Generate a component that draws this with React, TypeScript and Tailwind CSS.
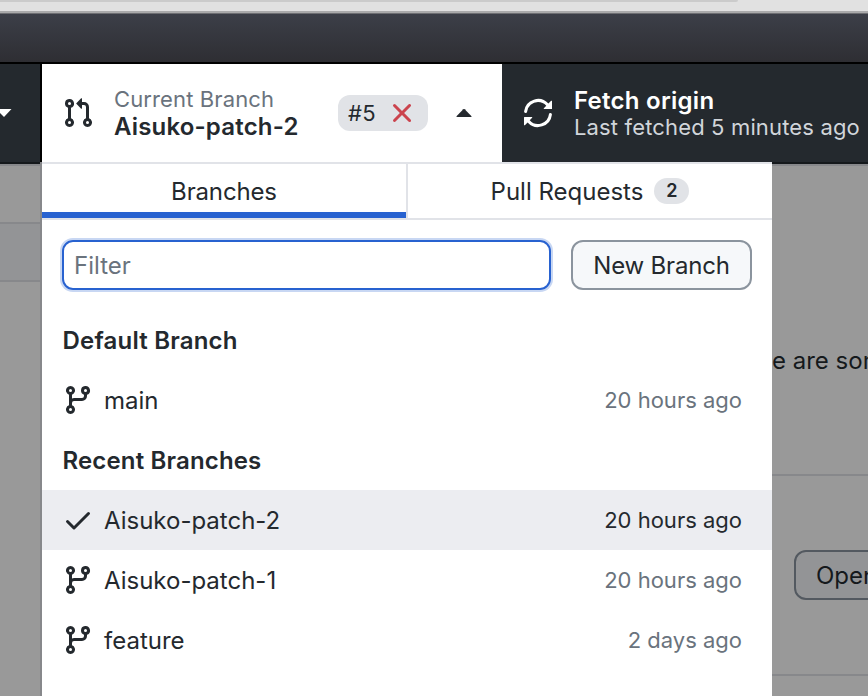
import React from "react";

const PULL =
  "M1.5 3.25a2.25 2.25 0 1 1 3 2.122v5.256a2.251 2.251 0 1 1-1.5 0V5.372A2.25 2.25 0 0 1 1.5 3.25Zm5.677-.177L9.573.677A.25.25 0 0 1 10 .854V2.5h1A2.5 2.5 0 0 1 13.5 5v5.628a2.251 2.251 0 1 1-1.5 0V5a1 1 0 0 0-1-1h-1v1.646a.25.25 0 0 1-.427.177L7.177 3.427a.25.25 0 0 1 0-.354ZM3.75 2.5a.75.75 0 1 0 0 1.5.75.75 0 0 0 0-1.5Zm0 9.5a.75.75 0 1 0 0 1.5.75.75 0 0 0 0-1.5Zm8.25.75a.75.75 0 1 0 1.5 0 .75.75 0 0 0-1.5 0Z";
const BRANCH =
  "M9.5 3.25a2.25 2.25 0 1 1 3 2.122V6A2.5 2.5 0 0 1 10 8.5H6a1 1 0 0 0-1 1v1.128a2.251 2.251 0 1 1-1.5 0V5.372a2.25 2.25 0 1 1 1.5 0v1.836A2.493 2.493 0 0 1 6 7h4a1 1 0 0 0 1-1v-.628A2.25 2.25 0 0 1 9.5 3.25Zm-6 0a.75.75 0 1 0 1.5 0 .75.75 0 0 0-1.5 0Zm8.25-.75a.75.75 0 1 0 0 1.5.75.75 0 0 0 0-1.5ZM4.25 12a.75.75 0 1 0 0 1.5.75.75 0 0 0 0-1.5Z";
const CHECK =
  "M13.78 4.22a.75.75 0 0 1 0 1.06l-7.25 7.25a.75.75 0 0 1-1.06 0L2.22 9.28a.751.751 0 0 1 .018-1.042.751.751 0 0 1 1.042-.018L6 10.94l6.72-6.72a.75.75 0 0 1 1.06 0Z";
const CROSS =
  "M3.72 3.72a.75.75 0 0 1 1.06 0L8 6.94l3.22-3.22a.749.749 0 0 1 1.275.326.749.749 0 0 1-.215.734L9.06 8l3.22 3.22a.749.749 0 0 1-.326 1.275.749.749 0 0 1-.734-.215L8 9.06l-3.22 3.22a.751.751 0 0 1-1.042-.018.751.751 0 0 1-.018-1.042L6.94 8 3.72 4.78a.75.75 0 0 1 0-1.06Z";
const SYNC =
  "M1.705 8.005a.75.75 0 0 1 .834.656 5.5 5.5 0 0 0 9.592 2.97l-1.204-1.204a.25.25 0 0 1 .177-.427h3.646a.25.25 0 0 1 .25.25v3.646a.25.25 0 0 1-.427.177l-1.38-1.38A7.002 7.002 0 0 1 1.05 8.84a.75.75 0 0 1 .656-.834ZM8 2.5a5.487 5.487 0 0 0-4.131 1.869l1.204 1.204A.25.25 0 0 1 4.896 6H1.25A.25.25 0 0 1 1 5.75V2.104a.25.25 0 0 1 .427-.177l1.38 1.38A7.002 7.002 0 0 1 14.95 7.16a.75.75 0 0 1-1.49.178A5.501 5.501 0 0 0 8 2.5Z";

function Icon({ d, className = "" }: { d: string; className?: string }) {
  return (
    <svg viewBox="0 0 16 16" className={`size-8 shrink-0 fill-current ${className}`}>
      <path d={d} />
    </svg>
  );
}

function BranchRow({ name, when, selected = false }: { name: string; when: string; selected?: boolean }) {
  return (
    <li className={`flex h-[60px] items-center pl-5 pr-[30px] ${selected ? "bg-[#ecedf1]" : ""}`}>
      <Icon d={selected ? CHECK : BRANCH} />
      <span className="ml-[10px] flex-1 pt-[2px] text-[24px]">{name}</span>
      <span className={`text-[22px] ${selected ? "" : "text-[#6a737d]"}`}>{when}</span>
    </li>
  );
}

export default function App() {
  return (
    <div className="relative flex h-[696px] w-[868px] flex-col overflow-hidden bg-[#999999] font-['Inter','Liberation_Sans',sans-serif] leading-[30px] whitespace-nowrap text-[#24292e]">
      <div className="h-[11px] shrink-0 bg-[#e1e1e1]">
        <div className="h-[2px] w-[738px] rounded-br-full bg-[#cbcbcb]" />
      </div>
      <div className="h-[3px] shrink-0 border-b border-[#6d6e72] bg-[#aaaaab]" />
      <div className="h-[50px] shrink-0 border-b-2 border-black bg-linear-to-b from-[#3c3f48] to-[#2e2e33]" />

      <header className="flex h-[98px] shrink-0 bg-[#24292e]">
        <div className="flex w-[42px] items-center border-r-2 border-black">
          <svg viewBox="0 0 12 8" className="h-2 w-3 fill-white"><path d="M0 0H11.5L4 8L0 4Z" /></svg>
        </div>
        <div className="flex w-[460px] items-center bg-white pl-5">
          <Icon d={PULL} />
          <div className="ml-5 w-[224px] leading-[27px]">
            <div className="text-[22px] tracking-[0.12px] text-[#6a737d]">Current Branch</div>
            <div className="text-[24px] font-semibold tracking-[0.18px]">Aisuko-patch-2</div>
          </div>
          <div className="flex h-9 w-[90px] items-center rounded-[12px] bg-[#e1e3e7] pl-[10px]">
            <span className="w-[38px] text-[22px] tracking-[0.3px]">#5</span>
            <Icon d={CROSS} className="text-[#cb444e]" />
          </div>
          <svg viewBox="0 0 16 8" className="ml-7 h-2 w-4 fill-current"><path d="M7.3.3a1 1 0 0 1 1.4 0L15.5 7.2Q15.6 8 15 8H1Q.4 8 .5 7.2Z" /></svg>
        </div>
        <div className="flex flex-1 items-center pl-5 text-white">
          <Icon d={SYNC} className="-scale-x-100" />
          <div className="ml-5 pt-[2px] leading-[27px]">
            <div className="text-[24px] font-semibold tracking-[0.27px]">Fetch origin</div>
            <div className="text-[22px] tracking-[0.15px] text-[#d1d5da]">Last fetched 5 minutes ago</div>
          </div>
        </div>
      </header>

      <main className="flex flex-1">
        <aside className="flex w-[42px] flex-col border-r-2 border-[#87888b]">
          <div className="h-[2px] bg-[#15191c]" />
          <div className="h-[60px] border-y-2 border-[#87888b]" />
          <div className="h-[58px] border-b-2 border-[#87888b] bg-[#939496]" />
        </aside>

        <section className="flex w-[730px] flex-col bg-white">
          <nav className="flex h-[58px] border-y-2 border-[#e1e3e8] text-[24px]">
            <div className="flex w-[364px] items-center justify-center border-b-[6px] border-[#2862d0] pt-2">
              <span className="tracking-[-0.15px]">Branches</span>
            </div>
            <div className="flex w-[366px] items-center justify-center border-l-2 border-[#e1e3e8]">
              <span className="pt-[2px]">Pull Requests</span>
              <span className="ml-[11px] flex h-[26px] w-[35px] items-center justify-center rounded-full bg-[#e1e3e7] text-[18px] font-semibold">2</span>
            </div>
          </nav>
          <div className="flex gap-5 px-5 pt-5 text-[24px]">
            <div className="flex h-[50px] w-[489px] items-center rounded-[11px] border-2 border-[#2862d0] pt-[2px] pl-[10px] text-[#6a737d] shadow-[0_0_0_2px_#c8d7f3]">Filter</div>
            <button className="h-[50px] w-[181px] rounded-[12px] border-2 border-[#8b949e] bg-[#f6f8fa] pt-[2px] tracking-[-0.2px]">New Branch</button>
          </div>
          <h2 className="mt-5 flex h-[60px] items-center pt-[2px] pl-[20.5px] text-[24px] font-semibold tracking-[0.2px]">Default Branch</h2>
          <ul><BranchRow name="main" when="20 hours ago" /></ul>
          <h2 className="flex h-[60px] items-center pt-[2px] pl-[20.5px] text-[24px] font-semibold tracking-[0.16px]">Recent Branches</h2>
          <ul>
            <BranchRow selected name="Aisuko-patch-2" when="20 hours ago" />
            <BranchRow name="Aisuko-patch-1" when="20 hours ago" />
            <BranchRow name="feature" when="2 days ago" />
          </ul>
        </section>

        <section className="flex w-24 flex-col overflow-hidden text-[24px] text-[#15191c]">
          <div className="h-[4px] shrink-0 border-t-2 border-b-2 border-t-[#15191c] border-b-[#87888b]" />
          <div className="flex h-[310px] shrink-0 items-end border-b-2 border-[#87888b] pb-[98px]">e are some</div>
          <div className="flex h-[200px] shrink-0 items-center border-b-2 border-[#87888b] pl-[22px]">
            <div className="flex h-[50px] w-[180px] shrink-0 items-center rounded-[12px] border-2 border-[#535960] bg-[#939496] pt-[2px] pl-5">Open in</div>
          </div>
        </section>
      </main>
    </div>
  );
}
